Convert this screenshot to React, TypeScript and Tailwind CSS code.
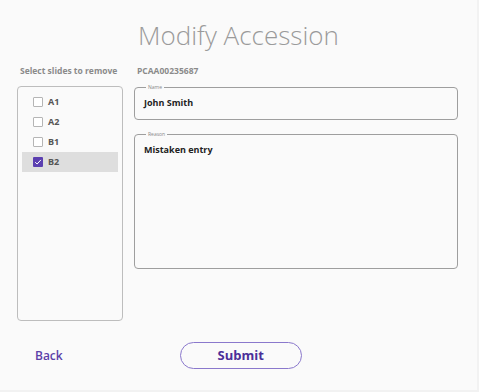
const slides = [
  { id: "A1", checked: false },
  { id: "A2", checked: false },
  { id: "B1", checked: false },
  { id: "B2", checked: true },
]

function Checkbox({ checked }: { checked: boolean }) {
  if (checked) {
    return (
      <span className="flex h-[10px] w-[10px] items-center justify-center rounded-[1px] bg-[#5b3fb0]">
        <svg width="8" height="8" viewBox="0 0 8 8" fill="none">
          <path d="M1.2 4.2 L3.1 6 L6.9 1.9" stroke="white" strokeWidth="1" />
        </svg>
      </span>
    )
  }
  return <span className="h-[10px] w-[10px] rounded-[1px] border border-[#b5b5b5] bg-white" />
}

export default function App() {
  return (
    <div className="flex h-[392px] w-[479px] flex-col bg-[#fafafa] font-['Open_Sans',sans-serif] border-r-2 border-b-2 border-[#f2f2f2]">
      <h1 className="pt-[17px] text-center text-[26px] font-light leading-[36px] text-[#9a9a9a]">
        Modify Accession
      </h1>

      <div className="mt-[12px] flex text-[8.5px] font-bold leading-[12px] text-[#8a8a8a]">
        <span className="ml-[20px] w-[117px]">Select slides to remove</span>
        <span>PCAA00235687</span>
      </div>

      <div className="mt-[9px] flex gap-[11px] pl-[17px]">
        <div className="flex h-[235px] w-[106px] flex-col rounded-[4px] border border-[#bdbdbd] px-[4px] pt-[5px]">
          {slides.map((s) => (
            <div
              key={s.id}
              className={`flex h-[20px] items-center gap-[5px] pl-[11px] text-[9px] font-bold text-[#555] ${s.checked ? "bg-[#dedede]" : ""}`}
            >
              <Checkbox checked={s.checked} />
              <span>{s.id}</span>
            </div>
          ))}
        </div>

        <div className="-mt-[2px] flex w-[324px] flex-col gap-[11px]">
          <fieldset className="h-[36px] rounded-[4px] border border-[#9e9e9e] px-[9px]">
            <legend className="ml-[2px] px-[2px] text-[5px] leading-[6px] text-[#888]">Name</legend>
            <div className="pt-[6px] text-[9px] font-bold text-[#222]">John Smith</div>
          </fieldset>
          <fieldset className="h-[138px] rounded-[4px] border border-[#9e9e9e] px-[9px]">
            <legend className="ml-[2px] px-[2px] text-[5px] leading-[6px] text-[#888]">Reason</legend>
            <div className="pt-[6px] text-[9px] font-bold text-[#222]">Mistaken entry</div>
          </fieldset>
        </div>
      </div>

      <div className="mt-[21px] flex items-center">
        <button className="ml-[35px] text-[12px] font-semibold text-[#5b3fa8]">Back</button>
        <button className="ml-[117px] h-[27px] w-[122px] rounded-full border border-[#8a78cc] text-[13px] font-bold text-[#4b2f99]">
          Submit
        </button>
      </div>
    </div>
  )
}
